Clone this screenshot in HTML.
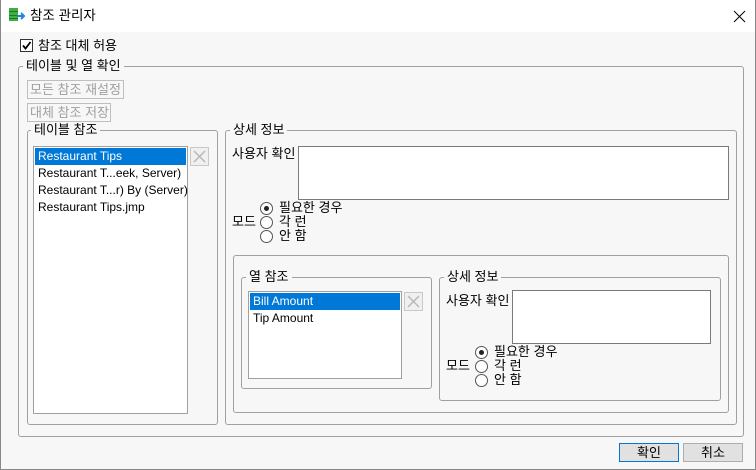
<!DOCTYPE html>
<html><head><meta charset="utf-8"><style>
*{box-sizing:border-box;margin:0;padding:0}
body{width:756px;height:470px;overflow:hidden;background:#f7f7f7;font-family:"Liberation Sans","Malgun Gothic","Noto Sans CJK KR",sans-serif;font-size:12px;color:#000;position:relative}
.a{position:absolute}
.win{position:absolute;left:0;top:0;width:756px;height:470px;border:1px solid #888;border-top:none}
.title{position:absolute;left:0;top:0;width:756px;height:32px;background:#fff}
.g{position:absolute;border:1px solid #a0a0a0;border-radius:3px}
.lb{position:absolute;background:#f7f7f7;padding:0 3px;line-height:14px;white-space:nowrap;font-size:13px}
.list{position:absolute;background:#fff;border:1px solid #a0a0a0}
.row{height:17px;line-height:17px;padding-left:3px;white-space:nowrap}
.sel{background:#0078d7;color:#fff}
.xb{position:absolute;width:19px;height:19px;border:1px solid #c8c8c8;background:#f0f0f0}
.ta{position:absolute;background:#fff;border:1px solid #7a7a7a}
.rad{position:absolute;width:13px;height:13px;border:1px solid #555;border-radius:50%;background:#fff}
.rad.on::after{content:"";position:absolute;left:3px;top:3px;width:5px;height:5px;border-radius:50%;background:#222}
.t{position:absolute;white-space:nowrap;line-height:14px;font-size:13px}
.btn{position:absolute;height:19px;border:1px solid #adadad;background:#e1e1e1;text-align:center;line-height:17px;font-size:13px}
.dis{position:absolute;height:19px;border:1px solid #bfbfbf;color:#a0a0a0;line-height:17px;padding:0 2px;white-space:nowrap;font-size:13px;overflow:hidden}
</style></head><body>
<div class="title"></div>
<div class="win"></div>
<svg class="a" style="left:8px;top:7px" width="18" height="16" viewBox="0 0 18 16">
<rect x="1" y="1" width="9" height="13" fill="#3cb043"/>
<rect x="1" y="4" width="9" height="1" fill="#1a7a20"/><rect x="1" y="8" width="9" height="1" fill="#1a7a20"/><rect x="1" y="11" width="9" height="1" fill="#1a7a20"/>
<path d="M9 9 L16 9 M13 6 L16 9 L13 12" stroke="#1e88d8" stroke-width="2" fill="none"/>
</svg>
<div class="t" style="left:30px;top:9px;font-size:13.5px">참조 관리자</div>
<svg class="a" style="left:733px;top:10px" width="13" height="13"><path d="M1 1L12 12M12 1L1 12" stroke="#000" stroke-width="1"/></svg>

<div class="a" style="left:20px;top:39px;width:13px;height:13px;border:1px solid #333;background:#fff"></div>
<svg class="a" style="left:21px;top:40px" width="11" height="11"><path d="M2 5.5L4.5 8.5L9.5 2" stroke="#000" stroke-width="1.8" fill="none"/></svg>
<div class="t" style="left:38px;top:39px">참조 대체 허용</div>

<div class="g" style="left:18px;top:66px;width:726px;height:371px"></div>
<div class="lb" style="left:23px;top:59px">테이블 및 열 확인</div>
<div class="dis" style="left:27px;top:80px;width:97px">모든 참조 재설정</div>
<div class="dis" style="left:27px;top:103px;width:84px">대체 참조 저장</div>

<div class="g" style="left:27px;top:130px;width:191px;height:295px"></div>
<div class="lb" style="left:31px;top:123px">테이블 참조</div>
<div class="list" style="left:33px;top:146px;width:155px;height:268px;padding:1px">
<div class="row sel">Restaurant Tips</div>
<div class="row">Restaurant T...eek, Server)</div>
<div class="row">Restaurant T...r) By (Server)</div>
<div class="row">Restaurant Tips.jmp</div>
</div>
<div class="xb" style="left:190px;top:147px"></div>
<svg class="a" style="left:193px;top:150px" width="13" height="13"><path d="M1 1L12 12M12 1L1 12" stroke="#b8b8b8" stroke-width="1.5"/></svg>

<div class="g" style="left:225px;top:130px;width:512px;height:295px"></div>
<div class="lb" style="left:230px;top:123px">상세 정보</div>
<div class="t" style="left:232px;top:147px">사용자 확인</div>
<div class="ta" style="left:298px;top:146px;width:431px;height:54px"></div>
<div class="rad on" style="left:260px;top:202px"></div>
<div class="rad" style="left:260px;top:216px"></div>
<div class="rad" style="left:260px;top:230px"></div>
<div class="t" style="left:279px;top:201px">필요한 경우</div>
<div class="t" style="left:232px;top:215px">모드</div>
<div class="t" style="left:279px;top:215px">각 런</div>
<div class="t" style="left:279px;top:229px">안 함</div>

<div class="g" style="left:233px;top:255px;width:496px;height:158px"></div>

<div class="g" style="left:241px;top:277px;width:191px;height:112px"></div>
<div class="lb" style="left:246px;top:270px">열 참조</div>
<div class="list" style="left:248px;top:291px;width:154px;height:88px;padding:1px">
<div class="row sel">Bill Amount</div>
<div class="row">Tip Amount</div>
</div>
<div class="xb" style="left:404px;top:292px"></div>
<svg class="a" style="left:407px;top:295px" width="13" height="13"><path d="M1 1L12 12M12 1L1 12" stroke="#b8b8b8" stroke-width="1.5"/></svg>

<div class="g" style="left:439px;top:277px;width:282px;height:124px"></div>
<div class="lb" style="left:444px;top:270px">상세 정보</div>
<div class="t" style="left:446px;top:294px">사용자 확인</div>
<div class="ta" style="left:512px;top:290px;width:199px;height:54px"></div>
<div class="rad on" style="left:475px;top:346px"></div>
<div class="rad" style="left:475px;top:360px"></div>
<div class="rad" style="left:475px;top:374px"></div>
<div class="t" style="left:494px;top:345px">필요한 경우</div>
<div class="t" style="left:446px;top:359px">모드</div>
<div class="t" style="left:494px;top:359px">각 런</div>
<div class="t" style="left:494px;top:373px">안 함</div>

<div class="btn" style="left:619px;top:443px;width:60px;border-color:#0078d7">확인</div>
<div class="btn" style="left:683px;top:443px;width:60px">취소</div>
</body></html>
